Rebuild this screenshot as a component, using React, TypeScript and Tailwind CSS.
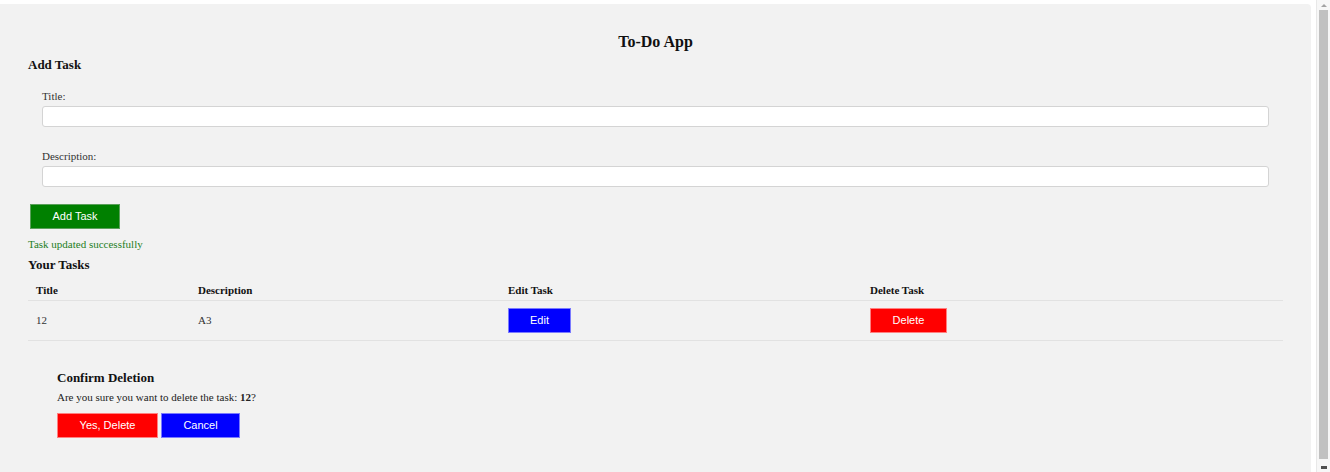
import { useState } from 'react'

type Task = { id: number; title: string; description: string }

const serif = { fontFamily: '"Liberation Serif", "Times New Roman", serif' }
const sans = { fontFamily: '"Liberation Sans", Arial, sans-serif' }

export default function App() {
  const [tasks] = useState<Task[]>([{ id: 1, title: '12', description: 'A3' }])

  return (
    <div className="flex h-[472px] overflow-hidden bg-white" style={serif}>
      <div className="mt-[4px] mr-[5px] flex-1 rounded-tr-[4px] bg-[#f2f2f2] px-[28px] pb-[30px] text-[#111]">
        <h1 className="pt-[28px] text-center text-[16px] font-bold leading-[20px]">To-Do App</h1>

        <h2 className="mt-[5px] text-[13px] font-bold leading-[16px]">Add Task</h2>

        <div className="px-[14px] pt-[16px]">
          <label className="block text-[11px] leading-[14px] text-[#333]">Title:</label>
          <input className="mt-[3px] block h-[21px] w-full rounded-[3px] border border-[#d4d4d4] bg-white" />
        </div>
        <div className="px-[14px] pt-[22px]">
          <label className="block text-[11px] leading-[14px] text-[#333]">Description:</label>
          <input className="mt-[3px] block h-[21px] w-full rounded-[3px] border border-[#d4d4d4] bg-white" />
        </div>

        <button
          className="mt-[17px] ml-[2px] h-[25px] w-[90px] border border-[#5aa05a] bg-[#008000] text-[11px] text-white"
          style={sans}
        >
          Add Task
        </button>

        <p className="mt-[8px] text-[11px] leading-[14px] text-[#1e7e1e]">Task updated successfully</p>

        <h2 className="mt-[6px] text-[13px] font-bold leading-[16px]">Your Tasks</h2>

        <table className="mt-[10px] w-[1255px] border-collapse text-[11px]">
          <thead>
            <tr className="border-b border-[#e2e2e2]">
              <th className="w-[162px] px-[8px] pb-[3px] text-left font-bold leading-[14px]">Title</th>
              <th className="w-[310px] px-[8px] pb-[3px] text-left font-bold leading-[14px]">Description</th>
              <th className="w-[362px] px-[8px] pb-[3px] text-left font-bold leading-[14px]">Edit Task</th>
              <th className="px-[8px] pb-[3px] text-left font-bold leading-[14px]">Delete Task</th>
            </tr>
          </thead>
          <tbody>
            {tasks.map((t) => (
              <tr key={t.id} className="h-[40px] border-b border-[#e2e2e2]">
                <td className="px-[8px] text-[#333]">{t.title}</td>
                <td className="px-[8px] text-[#333]">{t.description}</td>
                <td className="px-[8px]">
                  <button
                    className="h-[25px] w-[63px] border border-[#7a7aff] bg-[#0000ff] text-[11px] text-white"
                    style={sans}
                  >
                    Edit
                  </button>
                </td>
                <td className="px-[8px]">
                  <button
                    className="h-[25px] w-[77px] border border-[#ff8080] bg-[#ff0000] text-[11px] text-white"
                    style={sans}
                  >
                    Delete
                  </button>
                </td>
              </tr>
            ))}
          </tbody>
        </table>

        <div className="mt-[29px] pl-[29px]">
          <h3 className="text-[13px] font-bold leading-[15px]">Confirm Deletion</h3>
          <p className="mt-[5px] text-[11px] leading-[14px] text-[#222]">
            Are you sure you want to delete the task: <b>12</b>?
          </p>
          <div className="mt-[9px] flex gap-[3px]">
            <button
              className="h-[25px] w-[101px] border border-[#ff8080] bg-[#ff0000] text-[11px] text-white"
              style={sans}
            >
              Yes, Delete
            </button>
            <button
              className="h-[25px] w-[79px] border border-[#7a7aff] bg-[#0000ff] text-[11px] text-white"
              style={sans}
            >
              Cancel
            </button>
          </div>
        </div>
      </div>

      {/* scrollbar strip */}
      <div className="flex w-[15px] flex-col items-center border-l border-[#e8e8e8] bg-[#f7f7f7] px-[2px]">
        <div className="mt-[4px] h-0 w-0 border-x-[3px] border-b-[3px] border-x-transparent border-b-[#a3a3a3]" />
        <div className="mt-[3px] h-[449px] w-full bg-[#c1c1c1]" />
        <div className="mt-[7px] h-[3px] w-[6px] bg-[#505050]" />
      </div>
    </div>
  )
}
